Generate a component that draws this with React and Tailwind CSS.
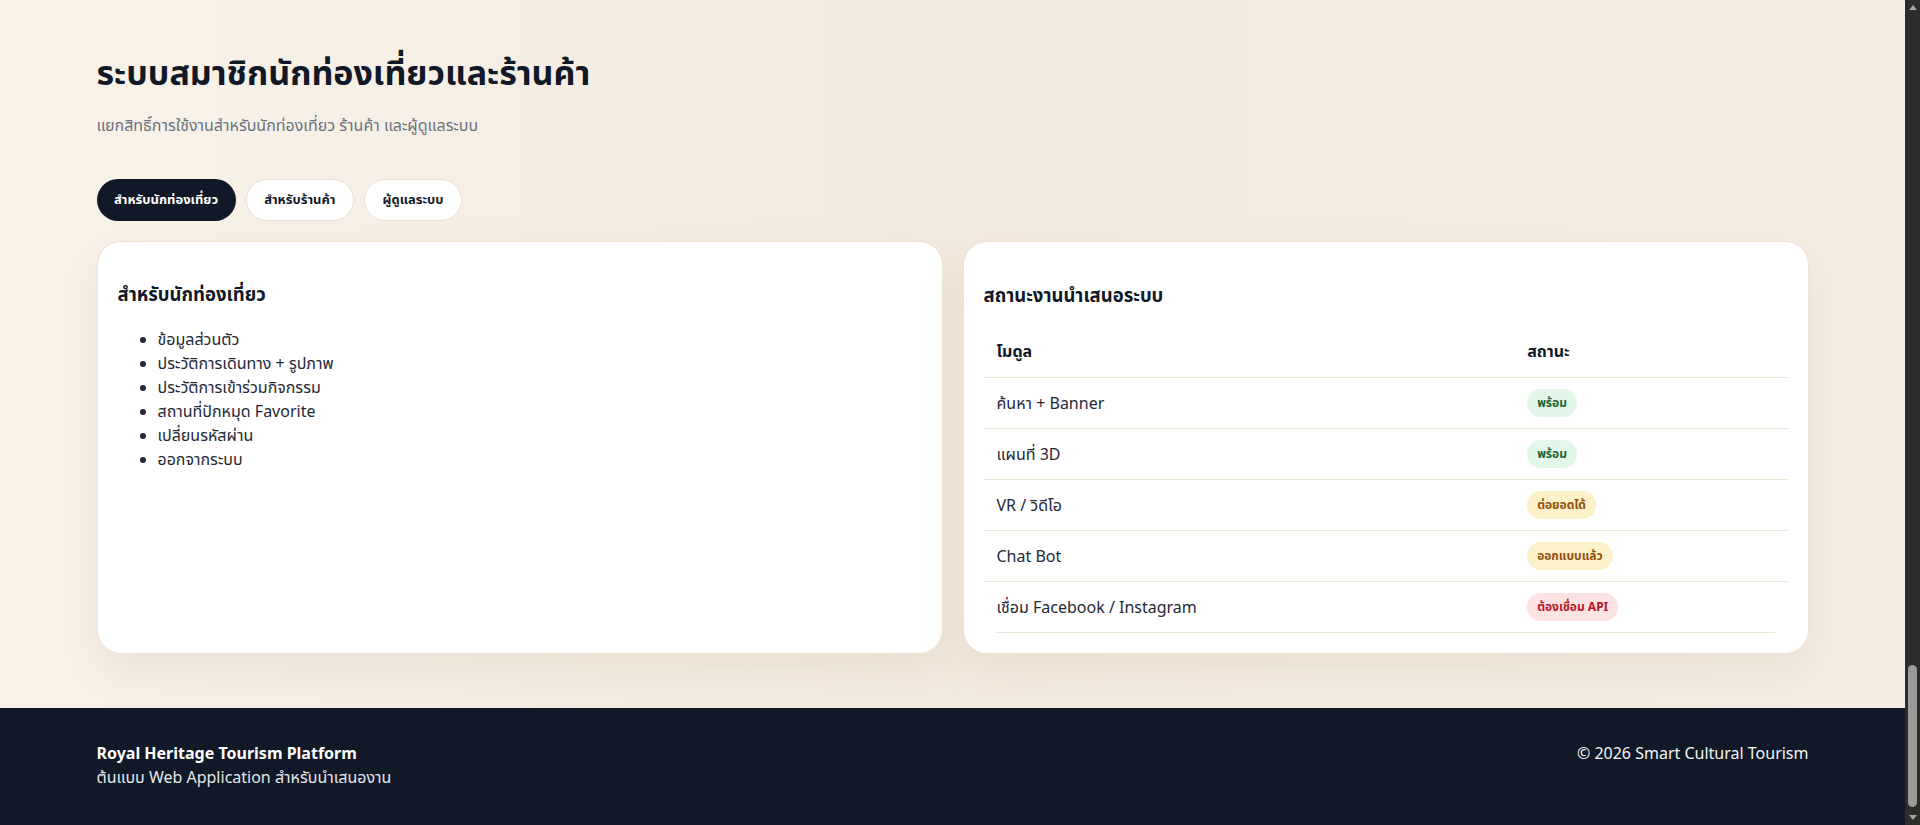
import React from "react";

const touristItems = [
  "ข้อมูลส่วนตัว",
  "ประวัติการเดินทาง + รูปภาพ",
  "ประวัติการเข้าร่วมกิจกรรม",
  "สถานที่ปักหมุด Favorite",
  "เปลี่ยนรหัสผ่าน",
  "ออกจากระบบ",
];

const modules = [
  { name: "ค้นหา + Banner", status: "พร้อม", tone: "ready" },
  { name: "แผนที่ 3D", status: "พร้อม", tone: "ready" },
  { name: "VR / วิดีโอ", status: "ต่อยอดได้", tone: "warn" },
  { name: "Chat Bot", status: "ออกแบบแล้ว", tone: "warn" },
  { name: "เชื่อม Facebook / Instagram", status: "ต้องเชื่อม API", tone: "bad" },
];

const tabs = ["สำหรับนักท่องเที่ยว", "สำหรับร้านค้า", "ผู้ดูแลระบบ"];

function StatusBadge({ tone, children }) {
  const cls =
    tone === "ready"
      ? "bg-[#e3f6ea] text-[#166534]"
      : tone === "warn"
      ? "bg-[#fdf1c9] text-[#92500e]"
      : "bg-[#fde2e4] text-[#b4182b]";
  return (
    <span className={`inline-block rounded-full px-2.5 py-1.5 text-[12px] font-bold leading-4 ${cls}`}>
      {children}
    </span>
  );
}

function TouristCard() {
  return (
    <section className="rounded-3xl border border-[#eee4d5] bg-white px-5 pt-[38px] pb-5 shadow-[0_18px_45px_rgba(140,105,60,0.10)]">
      <h3 className="text-[18.5px] font-bold leading-7 text-[#111827]">สำหรับนักท่องเที่ยว</h3>
      <ul className="mt-[19px] list-disc pl-10 text-[16px] leading-6 text-[#1f2937]">
        {touristItems.map((item) => (
          <li key={item}>{item}</li>
        ))}
      </ul>
    </section>
  );
}

function StatusCard() {
  return (
    <section className="rounded-3xl border border-[#eee4d5] bg-white px-5 pt-[39px] pb-5 shadow-[0_18px_45px_rgba(140,105,60,0.10)]">
      <h3 className="text-[18.5px] font-bold leading-7 text-[#111827]">สถานะงานนำเสนอระบบ</h3>
      <table className="mt-[17px] w-full border-collapse text-left">
        <thead>
          <tr className="h-[51px] border-b border-[#ece3d3]">
            <th className="w-[66%] px-[13px] text-[16px] font-bold text-[#111827]">โมดูล</th>
            <th className="px-[13px] text-[16px] font-bold text-[#111827]">สถานะ</th>
          </tr>
        </thead>
        <tbody>
          {modules.map((m, i) => (
            <tr
              key={m.name}
              className={`h-[51px] ${i < modules.length - 1 ? "border-b border-[#ece3d3]" : ""}`}
            >
              <td className="px-[13px] text-[16px] text-[#1f2937]">{m.name}</td>
              <td className="px-[13px]">
                <StatusBadge tone={m.tone}>{m.status}</StatusBadge>
              </td>
            </tr>
          ))}
        </tbody>
      </table>
      <div className="mx-[13px] h-px bg-[#ece3d3]" />
    </section>
  );
}

function Scrollbar() {
  return (
    <aside className="flex w-[15px] shrink-0 flex-col items-center bg-[#2c2c2c]">
      <div className="flex h-[15px] items-center justify-center">
        <div className="h-0 w-0 border-x-[4px] border-b-[5px] border-x-transparent border-b-[#a3a3a3]" />
      </div>
      <div className="flex flex-1 flex-col justify-end pb-[3px]">
        <div className="h-[142px] w-[9px] rounded-full bg-[#9b9b9b]" />
      </div>
      <div className="flex h-[15px] items-center justify-center">
        <div className="h-0 w-0 border-x-[4px] border-t-[5px] border-x-transparent border-t-[#a3a3a3]" />
      </div>
    </aside>
  );
}

export default function App() {
  return (
    <div
      className="flex h-[825px] w-full overflow-hidden"
      style={{ fontFamily: "'Noto Sans', 'Noto Sans Thai', 'Noto Sans Thai UI', sans-serif" }}
    >
      <div className="flex min-w-0 flex-1 flex-col bg-[#f6eee3]">
        <main className="flex-1 bg-gradient-to-r from-[#f8f2e9] via-[#f4ebdf] to-[#f6eee4] pt-[50px] pb-[54px]">
          <div className="mx-auto max-w-[1760px] px-6">
            <h2 className="text-[34px] font-bold leading-[44px] text-[#111827]">
              ระบบสมาชิกนักท่องเที่ยวและร้านค้า
            </h2>
            <p className="mt-[19px] text-[16px] leading-6 text-[#6b7280]">
              แยกสิทธิ์การใช้งานสำหรับนักท่องเที่ยว ร้านค้า และผู้ดูแลระบบ
            </p>
            <div className="mt-[42px] flex gap-2.5">
              {tabs.map((t, i) => (
                <button
                  key={t}
                  className={`h-[42px] rounded-full px-[17.5px] text-[13px] font-bold ${
                    i === 0
                      ? "bg-[#111827] text-white"
                      : "border border-[#ece1d1] bg-white text-[#111827]"
                  }`}
                >
                  {t}
                </button>
              ))}
            </div>
            <div className="mt-5 grid grid-cols-2 gap-5">
              <TouristCard />
              <StatusCard />
            </div>
          </div>
        </main>
        <footer className="bg-[#111827] pt-[33px] pb-[37px] text-white">
          <div className="mx-auto flex max-w-[1760px] items-start justify-between px-6">
            <div className="text-[16px] leading-6">
              <div className="font-bold">Royal Heritage Tourism Platform</div>
              <div className="text-[#e5e7eb]">ต้นแบบ Web Application สำหรับนำเสนองาน</div>
            </div>
            <div className="text-[16px] leading-6 text-[#f3f4f6]">© 2026 Smart Cultural Tourism</div>
          </div>
        </footer>
      </div>
      <Scrollbar />
    </div>
  );
}
